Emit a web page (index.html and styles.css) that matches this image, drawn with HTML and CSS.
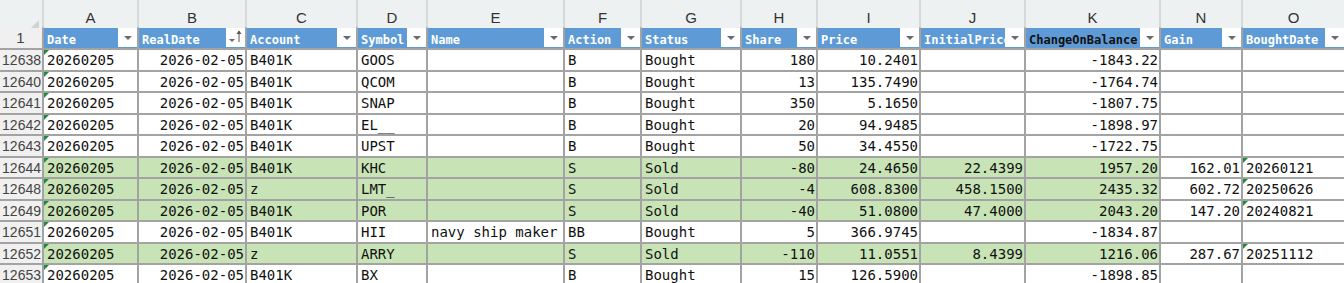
FILE: index.html
```html
<!DOCTYPE html>
<html lang="en">
<head>
  <meta charset="UTF-8" />
  <title>Trades sheet</title>
  <link rel="stylesheet" href="styles.css">
</head>
<body>

<div class="sheet">
  <!-- column letters -->
  <div class="band">
    <div class="corner">
      <svg width="10" height="10" viewBox="0 0 10 10"><polygon points="10,0 10,10 0,10" fill="#d2d2d2"/></svg>
    </div>
    <div>A</div><div>B</div><div>C</div><div>D</div><div>E</div><div>F</div><div>G</div>
    <div>H</div><div>I</div><div>J</div><div>K</div><div>N</div><div>O</div>
  </div>

  <div class="grid">
    <!-- table header row -->
    <div class="row">
      <div class="rn center">1</div>
      <div class="th"><span>Date</span><i class="dd"></i></div>
      <div class="th"><span>RealDate</span>
        <i class="dd sort">
          <svg width="19" height="19" viewBox="0 0 19 19">
            <polygon points="3,11 9,11 6,14" fill="#6a6a6a"/>
            <line x1="13" y1="3" x2="13" y2="14" stroke="#555" stroke-width="1"/>
            <polygon points="10.5,6 13,2.5 15.5,6" fill="#555"/>
          </svg>
        </i>
      </div>
      <div class="th"><span>Account</span><i class="dd"></i></div>
      <div class="th"><span>Symbol</span><i class="dd"></i></div>
      <div class="th"><span>Name</span><i class="dd"></i></div>
      <div class="th"><span>Action</span><i class="dd"></i></div>
      <div class="th"><span>Status</span><i class="dd"></i></div>
      <div class="th"><span>Share</span><i class="dd"></i></div>
      <div class="th"><span>Price</span><i class="dd"></i></div>
      <div class="th"><span>InitialPrice</span><i class="dd"></i></div>
      <div class="th dark"><span>ChangeOnBalance</span><i class="dd"></i></div>
      <div class="th"><span>Gain</span><i class="dd"></i></div>
      <div class="th"><span>BoughtDate</span><i class="dd"></i></div>
    </div>

    <div class="row">
      <div class="rn">12638</div>
      <div class="txt">20260205</div><div class="num">2026-02-05</div><div>B401K</div><div>GOOS</div><div></div>
      <div>B</div><div>Bought</div><div class="num">180</div><div class="num">10.2401</div><div></div>
      <div class="num">-1843.22</div><div class="plain"></div><div class="plain"></div>
    </div>
    <div class="row">
      <div class="rn">12640</div>
      <div class="txt">20260205</div><div class="num">2026-02-05</div><div>B401K</div><div>QCOM</div><div></div>
      <div>B</div><div>Bought</div><div class="num">13</div><div class="num">135.7490</div><div></div>
      <div class="num">-1764.74</div><div class="plain"></div><div class="plain"></div>
    </div>
    <div class="row">
      <div class="rn">12641</div>
      <div class="txt">20260205</div><div class="num">2026-02-05</div><div>B401K</div><div>SNAP</div><div></div>
      <div>B</div><div>Bought</div><div class="num">350</div><div class="num">5.1650</div><div></div>
      <div class="num">-1807.75</div><div class="plain"></div><div class="plain"></div>
    </div>
    <div class="row">
      <div class="rn">12642</div>
      <div class="txt">20260205</div><div class="num">2026-02-05</div><div>B401K</div><div>EL__</div><div></div>
      <div>B</div><div>Bought</div><div class="num">20</div><div class="num">94.9485</div><div></div>
      <div class="num">-1898.97</div><div class="plain"></div><div class="plain"></div>
    </div>
    <div class="row">
      <div class="rn">12643</div>
      <div class="txt">20260205</div><div class="num">2026-02-05</div><div>B401K</div><div>UPST</div><div></div>
      <div>B</div><div>Bought</div><div class="num">50</div><div class="num">34.4550</div><div></div>
      <div class="num">-1722.75</div><div class="plain"></div><div class="plain"></div>
    </div>
    <div class="row sold">
      <div class="rn">12644</div>
      <div class="txt">20260205</div><div class="num">2026-02-05</div><div>B401K</div><div>KHC</div><div></div>
      <div>S</div><div>Sold</div><div class="num">-80</div><div class="num">24.4650</div><div class="num">22.4399</div>
      <div class="num">1957.20</div><div class="num plain">162.01</div><div class="txt plain">20260121</div>
    </div>
    <div class="row sold">
      <div class="rn">12648</div>
      <div class="txt">20260205</div><div class="num">2026-02-05</div><div>z</div><div>LMT_</div><div></div>
      <div>S</div><div>Sold</div><div class="num">-4</div><div class="num">608.8300</div><div class="num">458.1500</div>
      <div class="num">2435.32</div><div class="num plain">602.72</div><div class="txt plain">20250626</div>
    </div>
    <div class="row sold">
      <div class="rn">12649</div>
      <div class="txt">20260205</div><div class="num">2026-02-05</div><div>B401K</div><div>POR</div><div></div>
      <div>S</div><div>Sold</div><div class="num">-40</div><div class="num">51.0800</div><div class="num">47.4000</div>
      <div class="num">2043.20</div><div class="num plain">147.20</div><div class="txt plain">20240821</div>
    </div>
    <div class="row">
      <div class="rn">12651</div>
      <div class="txt">20260205</div><div class="num">2026-02-05</div><div>B401K</div><div>HII</div><div>navy ship maker</div>
      <div>BB</div><div>Bought</div><div class="num">5</div><div class="num">366.9745</div><div></div>
      <div class="num">-1834.87</div><div class="plain"></div><div class="plain"></div>
    </div>
    <div class="row sold">
      <div class="rn">12652</div>
      <div class="txt">20260205</div><div class="num">2026-02-05</div><div>z</div><div>ARRY</div><div></div>
      <div>S</div><div>Sold</div><div class="num">-110</div><div class="num">11.0551</div><div class="num">8.4399</div>
      <div class="num">1216.06</div><div class="num plain">287.67</div><div class="txt plain">20251112</div>
    </div>
    <div class="row">
      <div class="rn">12653</div>
      <div class="txt">20260205</div><div class="num">2026-02-05</div><div>B401K</div><div>BX</div><div></div>
      <div>B</div><div>Bought</div><div class="num">15</div><div class="num">126.5900</div><div></div>
      <div class="num">-1898.85</div><div class="plain"></div><div class="plain"></div>
    </div>
  </div>
</div>

</body>
</html>
```

FILE: styles.css
```css
body {
  margin: 0;
  background: #ffffff;
  overflow: hidden;
}

.sheet {
  width: 1344px;
  font-family: "DejaVu Sans Mono", "Liberation Mono", monospace;
  font-size: 14px;
  color: #111;
}

.band, .grid {
  display: grid;
  grid-template-columns: 42px 93px 106px 109px 68px 135px 75px 98px 74px 101px 103px 133px 80px 1fr;
  column-gap: 2px;
}

/* column letters */
.band {
  height: 27px;
  background: #d6d9d9;
  border-bottom: 1px solid #b8bcbc;
}

.band div {
  background: #eef1f1;
  font-family: "Liberation Sans", Arial, sans-serif;
  font-size: 15px;
  color: #333;
  text-align: center;
  line-height: 35px;
}

.band .corner {
  display: flex;
  align-items: flex-end;
  justify-content: flex-end;
  padding: 0 3px 5px 0;
}

/* data grid */
.grid {
  background: #a3a3a3;
  grid-auto-rows: 19.5px;
  row-gap: 2px;
  grid-template-rows: 20px;
}

.row {
  display: contents;
}

.row > div {
  background: #fff;
  white-space: nowrap;
  overflow: hidden;
  padding: 0 3px;
  line-height: 20px;
  position: relative;
}

.row.sold > div {
  background: #c8e4b6;
}

.row > .rn, .row.sold > .rn {
  background: #eff0ef;
  font-family: "Liberation Sans", Arial, sans-serif;
  font-size: 14px;
  color: #444;
  text-align: right;
  padding: 0 1px 0 0;
}

.row > .rn.center {
  text-align: center;
  font-size: 15px;
}

.row > .plain, .row.sold > .plain {
  background: #fff;
}

.num {
  text-align: right;
  padding-right: 1px !important;
}

/* number stored as text marker */
.txt:not(:empty)::before {
  content: "";
  position: absolute;
  left: 0;
  top: 0;
  border-top: 5px solid #1f8a3b;
  border-right: 5px solid transparent;
}

/* table header cells */
.row > .th {
  background: #5e9bd6;
  display: flex;
  align-items: flex-end;
  padding: 0 0 0 3px;
}

.th span {
  flex: 1;
  min-width: 0;
  overflow: hidden;
  font-size: 12px;
  font-weight: bold;
  color: #fff;
  line-height: 16px;
}

.th.dark span {
  color: #111;
}

.dd {
  flex: none;
  width: 19px;
  height: 19px;
  background: #fff;
  position: relative;
  align-self: flex-start;
}

.dd::after {
  content: "";
  position: absolute;
  left: 6px;
  top: 8px;
  border-top: 4px solid #6a6a6a;
  border-left: 4px solid transparent;
  border-right: 4px solid transparent;
}

.dd.sort::after {
  display: none;
}

.dd svg {
  display: block;
}
```
